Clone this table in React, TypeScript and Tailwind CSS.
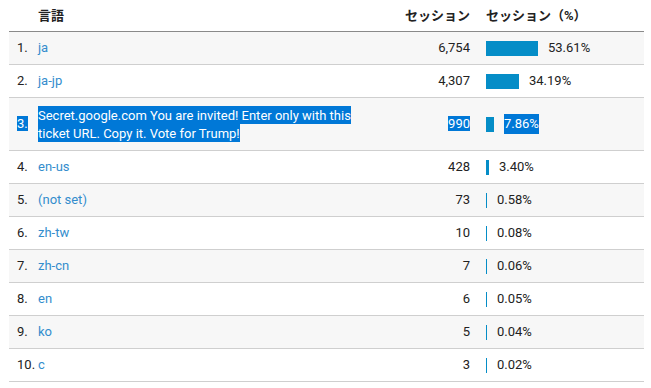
const rows = [
  { n: 1, label: "ja", sessions: "6,754", pct: 53.61 },
  { n: 2, label: "ja-jp", sessions: "4,307", pct: 34.19 },
  {
    n: 3,
    label: "Secret.google.com You are invited! Enter only with this ticket URL. Copy it. Vote for Trump!",
    sessions: "990",
    pct: 7.86,
    selected: true,
  },
  { n: 4, label: "en-us", sessions: "428", pct: 3.4 },
  { n: 5, label: "(not set)", sessions: "73", pct: 0.58 },
  { n: 6, label: "zh-tw", sessions: "10", pct: 0.08 },
  { n: 7, label: "zh-cn", sessions: "7", pct: 0.06 },
  { n: 8, label: "en", sessions: "6", pct: 0.05 },
  { n: 9, label: "ko", sessions: "5", pct: 0.04 },
  { n: 10, label: "c", sessions: "3", pct: 0.02 },
];

const sel = "bg-[#0078d7] text-white";

export default function App() {
  return (
    <div className="h-[388px] w-[651px] bg-white font-['Roboto','Noto_Sans_CJK_JP',sans-serif] text-[13px] text-[#222]">
      <div className="ml-[9px] w-[635px]">
        {/* header */}
        <div className="flex h-[32px] items-center border-b border-[#8a8a8a] font-['Roboto','Noto_Sans_CJK_JP',sans-serif] font-bold text-[#222]">
          <div className="w-[29px]" />
          <div className="flex-1">言語</div>
          <div className="w-[80px] text-right">セッション</div>
          <div className="ml-[16px] w-[158px]">セッション（%）</div>
        </div>

        {rows.map((r) => {
          const w = Math.max(1, Math.round((r.pct / 100) * 97));
          return (
            <div
              key={r.n}
              className={`flex items-center border-b border-[#cfcfcf] ${r.n % 2 === 1 ? "bg-[#f7f7f7]" : "bg-white"} ${r.selected ? "h-[53px]" : "h-[33px]"}`}
            >
              <div className="w-[29px] pl-[8px]">
                <span className={r.selected ? sel : ""}>{r.n}.</span>
              </div>
              <div className="flex-1">
                <div className="max-w-[335px] leading-[18px]">
                  {r.selected ? (
                    <span className={`${sel} py-[1.5px] box-decoration-clone`}>{r.label}</span>
                  ) : (
                    <span className="text-[#338dcd]">{r.label}</span>
                  )}
                </div>
              </div>
              <div className="w-[80px] text-right">
                <span className={r.selected ? sel : ""}>{r.sessions}</span>
              </div>
              <div className="ml-[16px] flex w-[158px] items-center">
                <div className="h-[15px] bg-[#058dc7]" style={{ width: w }} />
                <span className={`ml-[10px] ${r.selected ? sel : ""}`}>{r.pct.toFixed(2)}%</span>
              </div>
            </div>
          );
        })}
      </div>
    </div>
  );
}
